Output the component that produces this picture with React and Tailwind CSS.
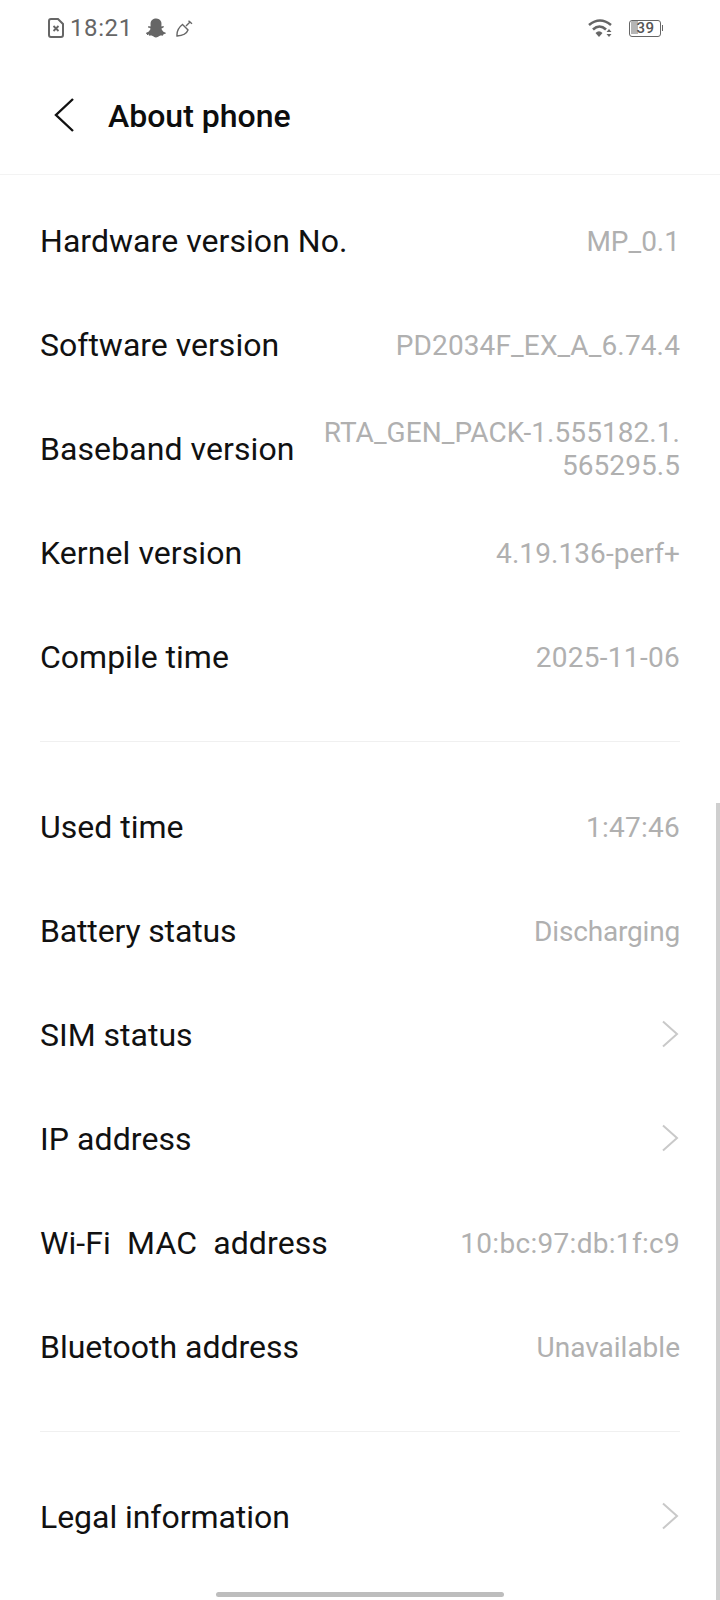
import React from 'react';
import { FaSnapchatGhost } from 'react-icons/fa';

const group1 = [
  ['Hardware version No.', 'MP_0.1', '', 'tracking-[0.05px]'],
  ['Software version', 'PD2034F_EX_A_6.74.4', 'tracking-[0.13px]', ''],
  ['Baseband version', 'RTA_GEN_PACK-1.555182.1.\n565295.5', 'tracking-[0.06px]', 'tracking-[0.08px]'],
  ['Kernel version', '4.19.136-perf+', 'tracking-[0.08px]', 'tracking-[0.08px]'],
  ['Compile time', '2025-11-06', 'tracking-[0.3px]', ''],
];

const group2 = [
  ['Used time', '1:47:46', 'tracking-[0.25px]', ''],
  ['Battery status', 'Discharging', 'tracking-[-0.18px]', 'tracking-[-0.15px]'],
  ['SIM status', null, '', ''],
  ['IP address', null, '', 'tracking-[0.08px]'],
  ['Wi-Fi  MAC  address', '10:bc:97:db:1f:c9', 'tracking-[0.3px]', 'tracking-[0.1px]'],
  ['Bluetooth address', 'Unavailable', '', ''],
];

function Chevron() {
  return (
    <svg width="18" height="28" viewBox="0 0 18 28" fill="none" stroke="#c9c9c9" strokeWidth="2">
      <path d="M2 1.5 L16 14 L2 26.5" />
    </svg>
  );
}

function Row({ label, value, valueClass = '', labelClass = '' }) {
  return (
    <div className="flex h-[104px] items-center justify-between px-[40px]">
      <span className={`text-[32px] leading-none whitespace-pre text-[#111] ${labelClass}`}>{label}</span>
      {value ? (
        <span className={`text-right text-[28px] leading-[33px] whitespace-pre text-[#b0b0b0] ${valueClass}`}>{value}</span>
      ) : (
        <span className="mr-[1px] mb-[2px]"><Chevron /></span>
      )}
    </div>
  );
}

function StatusBar() {
  return (
    <div className="flex h-[56px] items-center justify-between pr-[57px] pl-[48px] text-[#666]">
      <div className="flex items-center">
        <svg width="16" height="20" viewBox="0 0 16 20" fill="none" stroke="#666" strokeWidth="2">
          <path d="M3 1 H10 L15 6 V17 Q15 19 13 19 H3 Q1 19 1 17 V3 Q1 1 3 1 Z" />
          <path d="M5.5 8 L10.5 13 M10.5 8 L5.5 13" strokeWidth="1.8" />
        </svg>
        <span className="ml-[6px] text-[24px] leading-none tracking-[0.6px]">18:21</span>
        <FaSnapchatGhost className="ml-[13px] text-[#666]" size={20} />
        <svg className="ml-[10px]" width="17" height="17" viewBox="0 0 17 17" fill="none" stroke="#666" strokeWidth="1.4">
          <path d="M10 6 L14.5 1.5 M12.5 0.8 L16 3.8" />
          <path d="M6.5 4.5 L12 10 Q10 15.5 1 16 Q0.5 9 6.5 4.5 Z" />
        </svg>
      </div>
      <div className="flex items-center">
        <svg width="24" height="18" viewBox="0 0 24 18" fill="none" stroke="#666" strokeWidth="2.6">
          <path d="M1 6 Q12 -3 23 6" />
          <path d="M5 10.5 Q11.5 4.5 18 10.5" />
          <path d="M7.5 14 Q11 10.5 14.5 14 L11 18 Z" fill="#666" stroke="none" />
          <path d="M21 10 L23.5 13 H18.5 Z M18.5 15 H23.5 L21 18 Z" fill="#666" stroke="none" />
        </svg>
        <div className="ml-[17px] flex items-center">
          <div className="relative h-[17px] w-[32px] overflow-hidden rounded-[3px] border-[1.5px] border-[#666]">
            <div className="mt-[0.5px] ml-[1.5px] h-[13px] w-[7px] bg-[#b5b5b5]" />
            <span className="absolute inset-0 pl-[7px] text-[15px] leading-[14px] font-medium tracking-[0.5px] text-[#555]">39</span>
          </div>
          <div className="ml-[1px] h-[6px] w-[1.5px] bg-[#666]" />
        </div>
      </div>
    </div>
  );
}

export default function App() {
  return (
    <div className="relative h-[1600px] w-[720px] overflow-hidden bg-white font-['Roboto',sans-serif]">
      <StatusBar />
      <div className="flex h-[119px] items-center border-b border-[#f3f3f3] pl-[53px]">
        <svg width="22" height="36" viewBox="0 0 22 36" fill="none" stroke="#111" strokeWidth="2.4">
          <path d="M20 2 L3 18 L20 34" />
        </svg>
        <h1 className="ml-[33px] pt-[2px] text-[32px] leading-none font-medium text-[#0d0d0d]">About phone</h1>
      </div>

      <div className="pt-[14px]">
        {group1.map(([label, value, valueClass, labelClass]) => (
          <Row key={label} label={label} value={value} valueClass={valueClass} labelClass={labelClass} />
        ))}
      </div>
      <div className="mx-[40px] mt-[32px] mb-[33px] h-px bg-[#f0f0f0]" />
      <div>
        {group2.map(([label, value, valueClass, labelClass]) => (
          <Row key={label} label={label} value={value} valueClass={valueClass} labelClass={labelClass} />
        ))}
      </div>
      <div className="mx-[40px] mt-[32px] mb-[33px] h-px bg-[#f0f0f0]" />
      <Row label="Legal information" labelClass="tracking-[-0.05px]" />

      {/* overlays: scroll thumb and gesture bar */}
      <div className="absolute top-[803px] right-0 bottom-0 w-[4px] bg-[#cfcfcf]" />
      <div className="absolute bottom-[3px] left-[216px] h-[5px] w-[288px] rounded-full bg-[#bdbdbd]" />
    </div>
  );
}
